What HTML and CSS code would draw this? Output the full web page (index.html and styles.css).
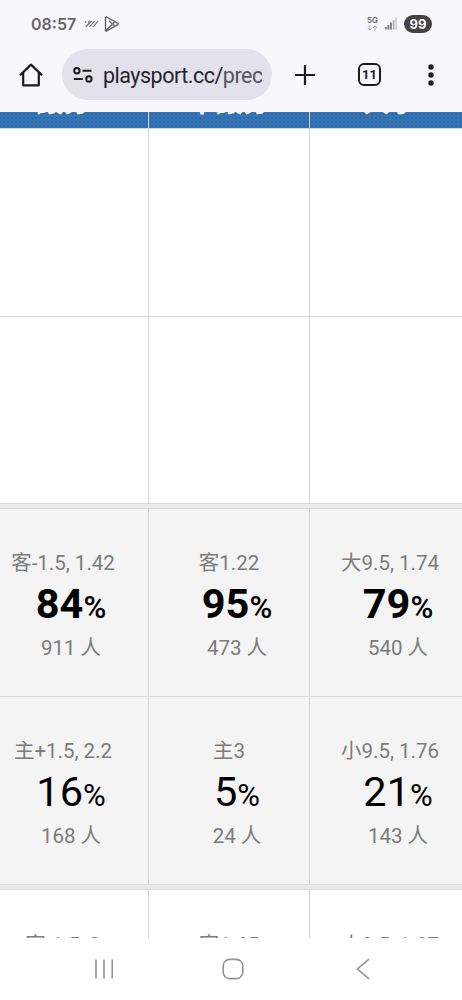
FILE: index.html
```html
<!DOCTYPE html>
<html lang="zh-Hant">
<head>
    <meta charset="UTF-8">
    <meta name="viewport" content="width=device-width, initial-scale=1.0">
    <title>playsport.cc</title>
    <link rel="stylesheet" href="styles.css">
</head>
<body>
    <div class="status-bar">
        <span class="clock">08:57</span>
        <svg class="stripes" width="15" height="10" viewBox="0 0 15 10" fill="none" stroke="#66656a" stroke-width="1.1">
            <path d="M1 3.6 2.4 2M4 3.6 5.4 2M1.8 7.8 7.6 2M5.6 7.8 10.6 2M9.4 7.8 14 2"/>
        </svg>
        <svg class="play" width="16" height="18" viewBox="0 0 16 18" fill="none" stroke="#66656a" stroke-width="1.4" stroke-linejoin="round">
            <path d="M1.5 2.4v13.2q.2.8 1.2.4L14 9.7q.7-.7 0-1.4L2.7 2q-1-.4-1.2.4zM2 15.6l8.8-8.9M5 6l6 5.3"/>
        </svg>
        <div class="signal">
            <div class="network">
                <span>5G</span>
                <svg width="11" height="6" viewBox="0 0 11 6" fill="none" stroke="#aaa9ae" stroke-width="1">
                    <path d="M2.8 0v5M.8 3l2 2 2-2M8 6V1M6 3l2-2 2 2"/>
                </svg>
            </div>
            <svg width="12" height="13" viewBox="0 0 12 13">
                <path fill="#66656a" d="M0 10h1.6v2.5H0zM2.6 8h1.6v4.5H2.6zM5.2 5.5h1.6v7H5.2z"/>
                <path fill="#aaa9ae" d="M7.8 3h1.6v9.5H7.8z"/>
                <path fill="#cccbd0" d="M10.4.5H12v12h-1.6z"/>
            </svg>
            <span class="battery">99</span>
        </div>
    </div>

    <div class="toolbar">
        <svg class="home" width="24" height="24" viewBox="0 0 24 24" fill="none" stroke="#1b1a20" stroke-width="2.2">
            <path d="M1 12.3 12 1.6l11 10.7M4.2 9.8v12.5h15.6V9.8" stroke-linejoin="round"/>
        </svg>
        <div class="address">
            <svg width="20" height="16" viewBox="0 0 20 16" fill="none" stroke="#1b1a20" stroke-width="2">
                <circle cx="3.9" cy="3.7" r="2.7"/>
                <circle cx="15.9" cy="12" r="2.7"/>
                <path d="M9.5 3.7h9M.8 12h9"/>
            </svg>
            <div class="url">playsport.cc/<span>prec</span></div>
        </div>
        <svg class="plus" width="22" height="22" viewBox="0 0 22 22" stroke="#1b1a20" stroke-width="2.2">
            <path d="M11 1v20M1 11h20"/>
        </svg>
        <div class="tabs">11</div>
        <svg class="more" width="6" height="22" viewBox="0 0 6 22" fill="#1b1a20">
            <circle cx="3" cy="3" r="2.7"/>
            <circle cx="3" cy="11" r="2.7"/>
            <circle cx="3" cy="19" r="2.7"/>
        </svg>
    </div>

    <div class="page">
        <div class="row head">
            <div>讓分</div>
            <div>不讓分</div>
            <div>大小</div>
        </div>
        <div class="row"><div></div><div></div><div></div></div>
        <div class="row last"><div></div><div></div><div></div></div>
        <div class="gap"></div>
        <div class="row voted win">
            <div>
                <p class="odds">客-1.5, 1.42</p>
                <p class="percent">84<small>%</small></p>
                <p class="people">911 人</p>
            </div>
            <div>
                <p class="odds">客1.22</p>
                <p class="percent">95<small>%</small></p>
                <p class="people">473 人</p>
            </div>
            <div>
                <p class="odds">大9.5, 1.74</p>
                <p class="percent">79<small>%</small></p>
                <p class="people">540 人</p>
            </div>
        </div>
        <div class="row voted last">
            <div>
                <p class="odds">主+1.5, 2.2</p>
                <p class="percent">16<small>%</small></p>
                <p class="people">168 人</p>
            </div>
            <div>
                <p class="odds">主3</p>
                <p class="percent">5<small>%</small></p>
                <p class="people">24 人</p>
            </div>
            <div>
                <p class="odds">小9.5, 1.76</p>
                <p class="percent">21<small>%</small></p>
                <p class="people">143 人</p>
            </div>
        </div>
        <div class="gap"></div>
        <div class="row next">
            <div><p class="odds">客-1.5, 2</p></div>
            <div><p class="odds">客1.65</p></div>
            <div><p class="odds">大9.5, 1.87</p></div>
        </div>
    </div>

    <div class="nav-bar">
        <svg width="20" height="20" viewBox="0 0 20 20" stroke="#929292" stroke-width="1.6">
            <path d="M2 .5v19M10 .5v19M18.2 .5v19"/>
        </svg>
        <svg class="home-key" width="22" height="22" viewBox="0 0 22 22" fill="none" stroke="#929292" stroke-width="1.6">
            <rect x="1.2" y="1.4" width="19.6" height="19.2" rx="6.5"/>
        </svg>
        <svg class="back-key" width="14" height="22" viewBox="0 0 14 22" fill="none" stroke="#929292" stroke-width="1.6">
            <path d="M13 1.2 1.4 11 13 20.8"/>
        </svg>
    </div>
</body>
</html>
```

FILE: styles.css
```css
* {
    box-sizing: border-box;
}
body {
    font-family: Roboto, "Noto Sans CJK TC", sans-serif;
    margin: 0;
    height: 1000px;
    background-color: #fff;
    color: #000;
    display: flex;
    flex-direction: column;
    overflow: hidden;
}
svg {
    display: block;
    flex: none;
}
p {
    margin: 0;
}
.status-bar {
    height: 47px;
    flex: none;
    padding: 0 30px 0 31px;
    background: #f9f7fe;
    display: flex;
    align-items: center;
    color: #66656a;
}
.clock {
    font: 600 16px/20px Inter, sans-serif;
    width: 53px;
}
.play {
    margin-left: 5px;
}
.signal {
    margin-left: auto;
    display: flex;
    align-items: center;
    gap: 7px;
}
.network {
    font: 600 8px/8px Inter, sans-serif;
    display: flex;
    flex-direction: column;
    align-items: center;
    gap: 1px;
}
.battery {
    width: 28px;
    height: 18px;
    border-radius: 9px;
    background: #444347;
    color: #fff;
    font: 700 13px/18px Inter, sans-serif;
    text-align: center;
}
.toolbar {
    height: 65px;
    flex: none;
    padding: 2px 28px 12px 19px;
    background: #f9f7fe;
    display: flex;
    align-items: center;
}
.address {
    width: 210px;
    height: 51px;
    margin-left: 19px;
    padding: 0 10px 0 11px;
    border-radius: 26px;
    background: #e2e1ec;
    display: flex;
    align-items: center;
    gap: 10px;
}
.url {
    flex: 1;
    overflow: hidden;
    white-space: nowrap;
    font-size: 21.5px;
    line-height: 32px;
    letter-spacing: -0.5px;
    color: #25242b;
    padding-top: 2px;
}
.url span {
    color: #55545c;
}
.plus {
    margin-left: 22px;
}
.tabs {
    width: 23px;
    height: 23px;
    margin-left: 42px;
    border: 2px solid #1b1a20;
    border-radius: 6px;
    font-size: 13px;
    font-weight: bold;
    line-height: 20px;
    text-align: center;
    color: #1b1a20;
}
.more {
    margin-left: auto;
}
.page {
    flex: 1;
    min-height: 0;
    overflow: hidden;
}
.row {
    width: 493px;
    height: 188px;
    margin-left: -22px;
    display: grid;
    grid-template-columns: 171px 161px 161px;
    border-bottom: 1px solid #d9d9d9;
}
.row > div {
    border-right: 1px solid #d3d3d3;
    text-align: center;
    white-space: nowrap;
}
.row.last {
    height: 187px;
    border-bottom: none;
}
.row.head {
    height: 17px;
    background: radial-gradient(circle, #2c68a9 0.7px, #3574b5 1.2px) 0 0 / 4px 4px;
    color: #fff;
    font-size: 27px;
    font-weight: bold;
}
/* header is scrolled half out of view */
.head > div {
    height: 46px;
    margin-top: -30px;
    line-height: 42px;
}
.gap {
    height: 6px;
    margin-top: -1px;
    background: #ebebeb;
    border-top: 1px solid #d9d9d9;
    border-bottom: 1px solid #d9d9d9;
}
.voted {
    background: #f4f4f4;
}
.voted.last {
    height: 188px;
}
.voted > div {
    padding-top: 39px;
}
.next > div {
    padding-top: 40px;
}
.odds {
    font-size: 20.5px;
    line-height: 30px;
    color: #7b7b7b;
}
.percent {
    padding-left: 16px;
    font-size: 41.5px;
    line-height: 52px;
}
.percent small {
    font-size: 31px;
}
.win .percent {
    font-weight: bold;
}
.win small {
    font-weight: 500;
}
.people {
    margin-top: -1px;
    padding-left: 16px;
    font-size: 20.5px;
    line-height: 30px;
    color: #7b7b7b;
}
.nav-bar {
    height: 62px;
    flex: none;
    padding-left: 94px;
    background: #fff;
    display: flex;
    align-items: center;
}
.home-key {
    margin-left: 108px;
}
.back-key {
    margin-left: 112px;
}
```
